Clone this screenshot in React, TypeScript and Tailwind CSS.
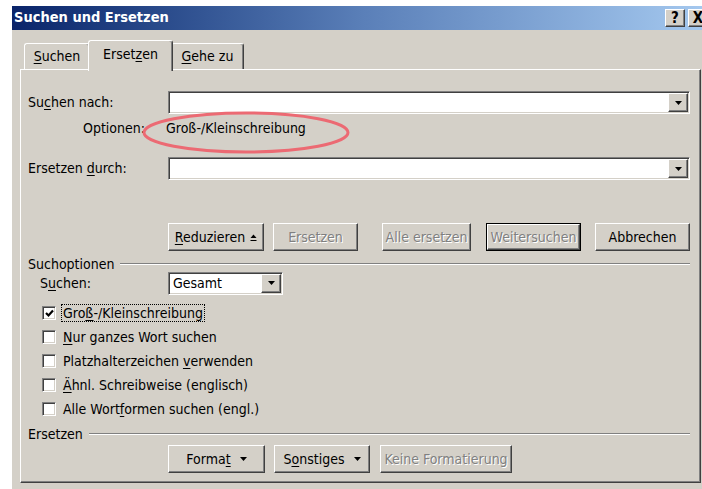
import type { ReactNode } from "react";

// classic 3D bevels
const raised =
  "border border-t-white border-l-white border-r-[#404040] border-b-[#404040] shadow-[inset_-1px_-1px_0_#808080]";
const sunken =
  "border border-t-[#808080] border-l-[#808080] border-r-white border-b-white shadow-[inset_1px_1px_0_#404040,inset_-1px_-1px_0_#d4d0c8]";
const grayed = "text-[#808080] [text-shadow:1px_1px_0_#fff]";

function Key({ children }: { children: ReactNode }) {
  return <span className="underline decoration-1 underline-offset-2">{children}</span>;
}

function DownArrow() {
  return (
    <svg width="7" height="4" viewBox="0 0 7 4">
      <path d="M0 0h7L3.5 4z" fill="#000" />
    </svg>
  );
}

function Btn({
  children,
  className = "",
  disabled,
  primary,
}: {
  children: ReactNode;
  className?: string;
  disabled?: boolean;
  primary?: boolean;
}) {
  if (primary) {
    return (
      <div className={`h-[28px] border border-black ${className}`}>
        <div
          className={`flex h-full items-center justify-center bg-[#d4d0c8] ${raised} ${
            disabled ? grayed : ""
          }`}
        >
          {children}
        </div>
      </div>
    );
  }
  return (
    <div
      className={`flex h-[28px] items-center justify-center bg-[#d4d0c8] ${raised} ${
        disabled ? grayed : ""
      } ${className}`}
    >
      {children}
    </div>
  );
}

function Combo({ value = "", className = "" }: { value?: string; className?: string }) {
  return (
    <div className={`flex h-[23px] bg-white p-[1px] ${sunken} ${className}`}>
      <div className="flex-1 pl-[3px] leading-[19px]">{value}</div>
      <div className={`flex w-[20px] items-center justify-center bg-[#d4d0c8] ${raised}`}>
        <DownArrow />
      </div>
    </div>
  );
}

function Check({ checked }: { checked?: boolean }) {
  return (
    <div className={`flex h-[14px] w-[14px] items-center justify-center bg-white ${sunken}`}>
      {checked && (
        <svg width="9" height="9" viewBox="0 0 9 9">
          <path d="M1 4l2.5 2.5L8 1.5" stroke="#000" strokeWidth="2.2" fill="none" />
        </svg>
      )}
    </div>
  );
}

function GroupHead({ title }: { title: string }) {
  return (
    <div className="flex h-[14px] items-center gap-[6px]">
      <span className="leading-[14px]">{title}</span>
      <div className="h-[2px] flex-1 border-t border-t-[#808080] border-b border-b-white" />
    </div>
  );
}

function Tab({ children, active, className = "" }: { children: ReactNode; active?: boolean; className?: string }) {
  return (
    <div
      className={`flex items-center justify-center rounded-t-[3px] border-t border-l border-r border-t-white border-l-white border-r-[#404040] bg-[#d4d0c8] shadow-[inset_-1px_0_0_#808080] ${
        active ? "relative z-10 -mb-[2px] h-[31px] pb-[4px]" : "h-[26px]"
      } ${className}`}
    >
      {children}
    </div>
  );
}

const options: { label: ReactNode; checked?: boolean; focus?: boolean }[] = [
  {
    label: (
      <>
        Gro<Key>ß</Key>-/Kleinschreibung
      </>
    ),
    checked: true,
    focus: true,
  },
  {
    label: (
      <>
        <Key>N</Key>ur ganzes Wort suchen
      </>
    ),
  },
  {
    label: (
      <>
        Platzhalterzeichen <Key>v</Key>erwenden
      </>
    ),
  },
  {
    label: (
      <>
        <Key>Ä</Key>hnl. Schreibweise (englisch)
      </>
    ),
  },
  {
    label: (
      <>
        Alle Wort<Key>f</Key>ormen suchen (engl.)
      </>
    ),
  },
];

export default function App() {
  return (
    <div className="relative h-[489px] w-[702px] overflow-hidden bg-white pl-[12px] pt-[6px] font-['DejaVu_Sans_Condensed','DejaVu_Sans',sans-serif] text-[14px] text-black">
      <div className="h-[483px] w-[700px] bg-[#d4d0c8]">
        {/* caption */}
        <div className="flex h-[24px] items-center justify-between bg-gradient-to-r from-[#0a246a] via-[#5a7fb8] to-[#a6caf0] pl-[2px] pr-[4px]">
          <span className="text-[14.5px] font-bold text-white">Suchen und Ersetzen</span>
          <div className="flex gap-[3px]">
            <div className={`flex h-[18px] w-[20px] items-center justify-center bg-[#d4d0c8] text-[15px] font-bold leading-none ${raised}`}>
              ?
            </div>
            <div className={`flex h-[18px] w-[20px] items-center justify-center bg-[#d4d0c8] text-[15px] font-bold leading-none ${raised}`}>
              X
            </div>
          </div>
        </div>

        {/* tabs */}
        <div className="flex items-end pl-[12px] pt-[10px]">
          <Tab className="w-[66px]">
            <span>
              <Key>S</Key>uchen
            </span>
          </Tab>
          <Tab active className="-ml-[2px] -mr-[2px] w-[85px]">
            <span>
              Erset<Key>z</Key>en
            </span>
          </Tab>
          <Tab className="w-[73px]">
            <span>
              <Key>G</Key>ehe zu
            </span>
          </Tab>
        </div>

        {/* tab page */}
        <div className={`ml-[8px] flex h-[414px] w-[681px] flex-col pl-[7px] pr-[10px] pt-[21px] ${raised}`}>
          <div className="grid h-[23px] grid-cols-[140px_1fr] items-center">
            <span>
              Su<Key>c</Key>hen nach:
            </span>
            <Combo />
          </div>
          <div className="grid h-[28px] grid-cols-[140px_1fr] items-center">
            <span className="pl-[55px]">Optionen:</span>
            <span className="-ml-[2px]">Groß-/Kleinschreibung</span>
          </div>
          <div className="mt-[15px] grid h-[23px] grid-cols-[140px_1fr] items-center">
            <span>
              Ersetzen <Key>d</Key>urch:
            </span>
            <Combo />
          </div>

          <div className="mt-[43px] flex pl-[140px]">
            <Btn className="w-[96px] gap-[5px]">
              <span>
                <Key>R</Key>eduzieren
              </span>
              <svg width="7" height="9" viewBox="0 0 7 9">
                <path d="M0.5 5h6L3.5 1.5z" fill="#000" />
                <path d="M0.5 7.5h6" stroke="#000" strokeWidth="1" />
              </svg>
            </Btn>
            <Btn disabled className="ml-[9px] w-[85px]">
              Ersetzen
            </Btn>
            <Btn disabled className="ml-[24px] w-[89px]">
              Alle ersetzen
            </Btn>
            <Btn disabled primary className="ml-[15px] w-[95px]">
              Weitersuchen
            </Btn>
            <Btn className="ml-[14px] w-[95px]">Abbrechen</Btn>
          </div>

          <div className="mt-[6px]">
            <GroupHead title="Suchoptionen" />
          </div>
          <div className="grid h-[24px] grid-cols-[140px_1fr] items-center">
            <span className="pl-[12px]">
              S<Key>u</Key>chen:
            </span>
            <Combo value="Gesamt" className="w-[115px]" />
          </div>

          <div className="mt-[6px] flex flex-col pl-[14px]">
            {options.map((o, i) => (
              <div key={i} className="flex h-[24px] items-center gap-[6px]">
                <Check checked={o.checked} />
                <span className={`px-[1px] leading-[16px] ${o.focus ? "outline-1 outline-dotted outline-black" : ""}`}>
                  {o.label}
                </span>
              </div>
            ))}
          </div>

          <div className="mt-[6px]">
            <GroupHead title="Ersetzen" />
          </div>
          <div className="mt-[4px] flex pl-[140px]">
            <Btn className="w-[97px] gap-[9px]">
              <span>
                Forma<Key>t</Key>
              </span>
              <DownArrow />
            </Btn>
            <Btn className="ml-[9px] w-[96px] gap-[9px]">
              <span>
                S<Key>o</Key>nstiges
              </span>
              <DownArrow />
            </Btn>
            <Btn disabled className="ml-[10px] w-[132px]">
              Keine Formatierung
            </Btn>
          </div>
        </div>
      </div>

      {/* red marker ring */}
      <svg className="pointer-events-none absolute left-[141px] top-[110px]" width="210" height="45" viewBox="0 0 210 45">
        <ellipse cx="105" cy="22.5" rx="102" ry="19.5" fill="none" stroke="#ec6a73" strokeWidth="3" />
      </svg>
    </div>
  );
}
